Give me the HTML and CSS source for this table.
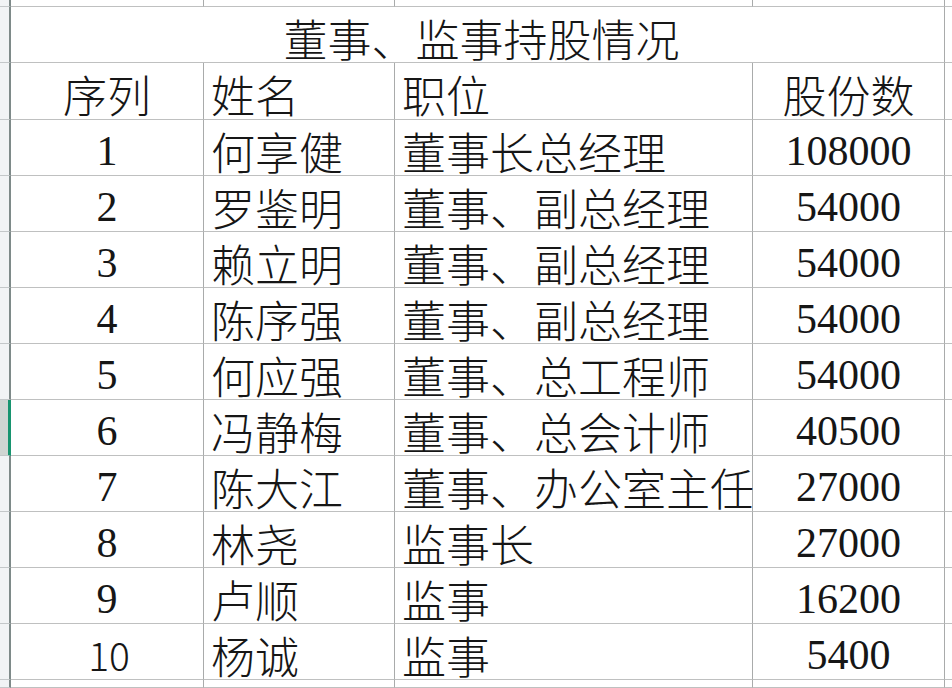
FILE: index.html
```html
<!DOCTYPE html>
<html lang="zh-CN">
<head>
<meta charset="utf-8">
<title>董事、监事持股情况</title>
<link rel="stylesheet" href="styles.css">
</head>
<body>
<div class="sheet">
  <!-- top partial row -->
  <div class="rh"></div>
  <div class="c"></div><div class="c"></div><div class="c"></div><div class="c"></div><div class="c last"></div>

  <!-- title -->
  <div class="rh"></div>
  <div class="c title">董事、监事持股情况</div>
  <div class="c last"></div>

  <!-- header -->
  <div class="rh"></div>
  <div class="c ctr">序列</div>
  <div class="c left">姓名</div>
  <div class="c left">职位</div>
  <div class="c ctr">股份数</div>
  <div class="c last"></div>

  <div class="rh"></div><div class="c ctr num">1</div><div class="c left">何享健</div><div class="c left">董事长总经理</div><div class="c ctr num">108000</div><div class="c last"></div>
  <div class="rh"></div><div class="c ctr num">2</div><div class="c left">罗鉴明</div><div class="c left">董事、副总经理</div><div class="c ctr num">54000</div><div class="c last"></div>
  <div class="rh"></div><div class="c ctr num">3</div><div class="c left">赖立明</div><div class="c left">董事、副总经理</div><div class="c ctr num">54000</div><div class="c last"></div>
  <div class="rh"></div><div class="c ctr num">4</div><div class="c left">陈序强</div><div class="c left">董事、副总经理</div><div class="c ctr num">54000</div><div class="c last"></div>
  <div class="rh"></div><div class="c ctr num">5</div><div class="c left">何应强</div><div class="c left">董事、总工程师</div><div class="c ctr num">54000</div><div class="c last"></div>
  <div class="rh sel"></div><div class="c ctr num">6</div><div class="c left">冯静梅</div><div class="c left">董事、总会计师</div><div class="c ctr num">40500</div><div class="c last"></div>
  <div class="rh"></div><div class="c ctr num">7</div><div class="c left">陈大江</div><div class="c left">董事、办公室主任</div><div class="c ctr num">27000</div><div class="c last"></div>
  <div class="rh"></div><div class="c ctr num">8</div><div class="c left">林尧</div><div class="c left">监事长</div><div class="c ctr num">27000</div><div class="c last"></div>
  <div class="rh"></div><div class="c ctr num">9</div><div class="c left">卢顺</div><div class="c left">监事</div><div class="c ctr num">16200</div><div class="c last"></div>
  <div class="rh"></div><div class="c ctr sans">10</div><div class="c left">杨诚</div><div class="c left">监事</div><div class="c ctr num">5400</div><div class="c last"></div>

  <!-- bottom partial row -->
  <div class="rh"></div>
  <div class="c"></div><div class="c"></div><div class="c"></div><div class="c"></div><div class="c last"></div>
</div>
</body>
</html>
```

FILE: styles.css
```css
html, body {
  margin: 0;
  padding: 0;
  background: #ffffff;
}

.sheet {
  width: 952px;
  height: 688px;
  overflow: hidden;
  display: grid;
  grid-template-columns: 11px 193px 191px 358px 192px 1fr;
  grid-template-rows: 7px 56px 57px repeat(10, 56px) 1fr;
  font-family: "Noto Sans CJK SC", "Noto Sans", sans-serif;
  font-size: 44px;
  font-weight: 300;
  color: #161616;
}

.rh {
  box-sizing: border-box;
  background: #f1f3f5;
  border-right: 2px solid #7e8a89;
  border-bottom: 1px solid #c3c7c9;
}

.rh.sel {
  background: #cfd5d2;
  border-right: 3px solid #17946f;
}

.c {
  box-sizing: border-box;
  border-right: 1px solid #a9abab;
  border-bottom: 1px solid #bfc0c0;
  display: flex;
  align-items: center;
  padding-top: 6px;
  line-height: 1;
  white-space: nowrap;
}

.c.last {
  border-right: none;
}

.title {
  grid-column: 2 / 6;
  justify-content: center;
  padding-left: 8px;
}

.ctr {
  justify-content: center;
}

.left {
  justify-content: flex-start;
  padding-left: 7px;
}

.num {
  font-family: "Liberation Serif", "Times New Roman", serif;
  font-size: 42px;
  font-weight: 400;
}

.sans {
  font-family: "Noto Sans CJK SC", sans-serif;
  font-size: 39px;
  padding-left: 4px;
}
```
